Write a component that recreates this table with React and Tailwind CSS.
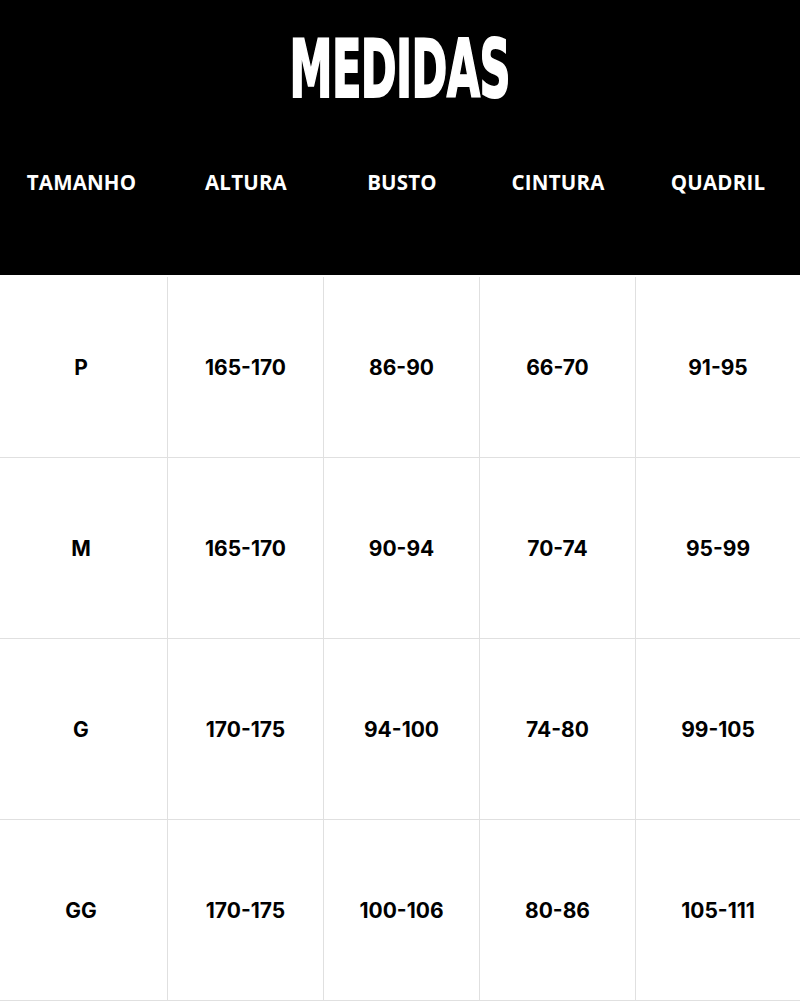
const headers = ["TAMANHO", "ALTURA", "BUSTO", "CINTURA", "QUADRIL"];

const rows = [
  ["P", "165-170", "86-90", "66-70", "91-95"],
  ["M", "165-170", "90-94", "70-74", "95-99"],
  ["G", "170-175", "94-100", "74-80", "99-105"],
  ["GG", "170-175", "100-106", "80-86", "105-111"],
];

const cols = "grid grid-cols-[168px_156px_156px_156px_1fr]";

const App = () => {
  return (
    <div className="w-[800px] h-[1001px] bg-white overflow-hidden">
      {/* Header */}
      <div className="bg-black h-[275px] flex flex-col">
        <div className="h-[138px] flex items-center justify-center">
          <h1 className="inline-block text-white text-[80px] leading-none font-bold font-stretch-condensed font-['DejaVu_Sans',sans-serif] scale-x-[0.6] tracking-[-1px] mt-[1px] [-webkit-text-stroke:2px_white]">
            MEDIDAS
          </h1>
        </div>
        <div className={`${cols} h-[88px]`}>
          {headers.map((h, j) => (
            <div
              key={h}
              className={`flex items-center justify-center text-white text-[20.5px] font-bold font-['Open_Sans',sans-serif] tracking-[0.2px] pt-[1px] ${
                j === 0 ? "pr-[5px]" : ""
              }`}
            >
              {h}
            </div>
          ))}
        </div>
      </div>

      {/* Body */}
      <div className={`${cols} mt-[2px]`}>
        {rows.map((row, i) =>
          row.map((cell, j) => (
            <div
              key={`${i}-${j}`}
              className={`h-[181px] flex items-center justify-center border-b border-[#e0e0e0] text-black text-[21px] font-bold font-['Inter',sans-serif] pt-[2px] ${
                j < 4 ? "border-r" : ""
              } ${j === 0 ? "pr-[5px]" : ""}`}
            >
              {cell}
            </div>
          ))
        )}
      </div>
    </div>
  );
};

export default App;
